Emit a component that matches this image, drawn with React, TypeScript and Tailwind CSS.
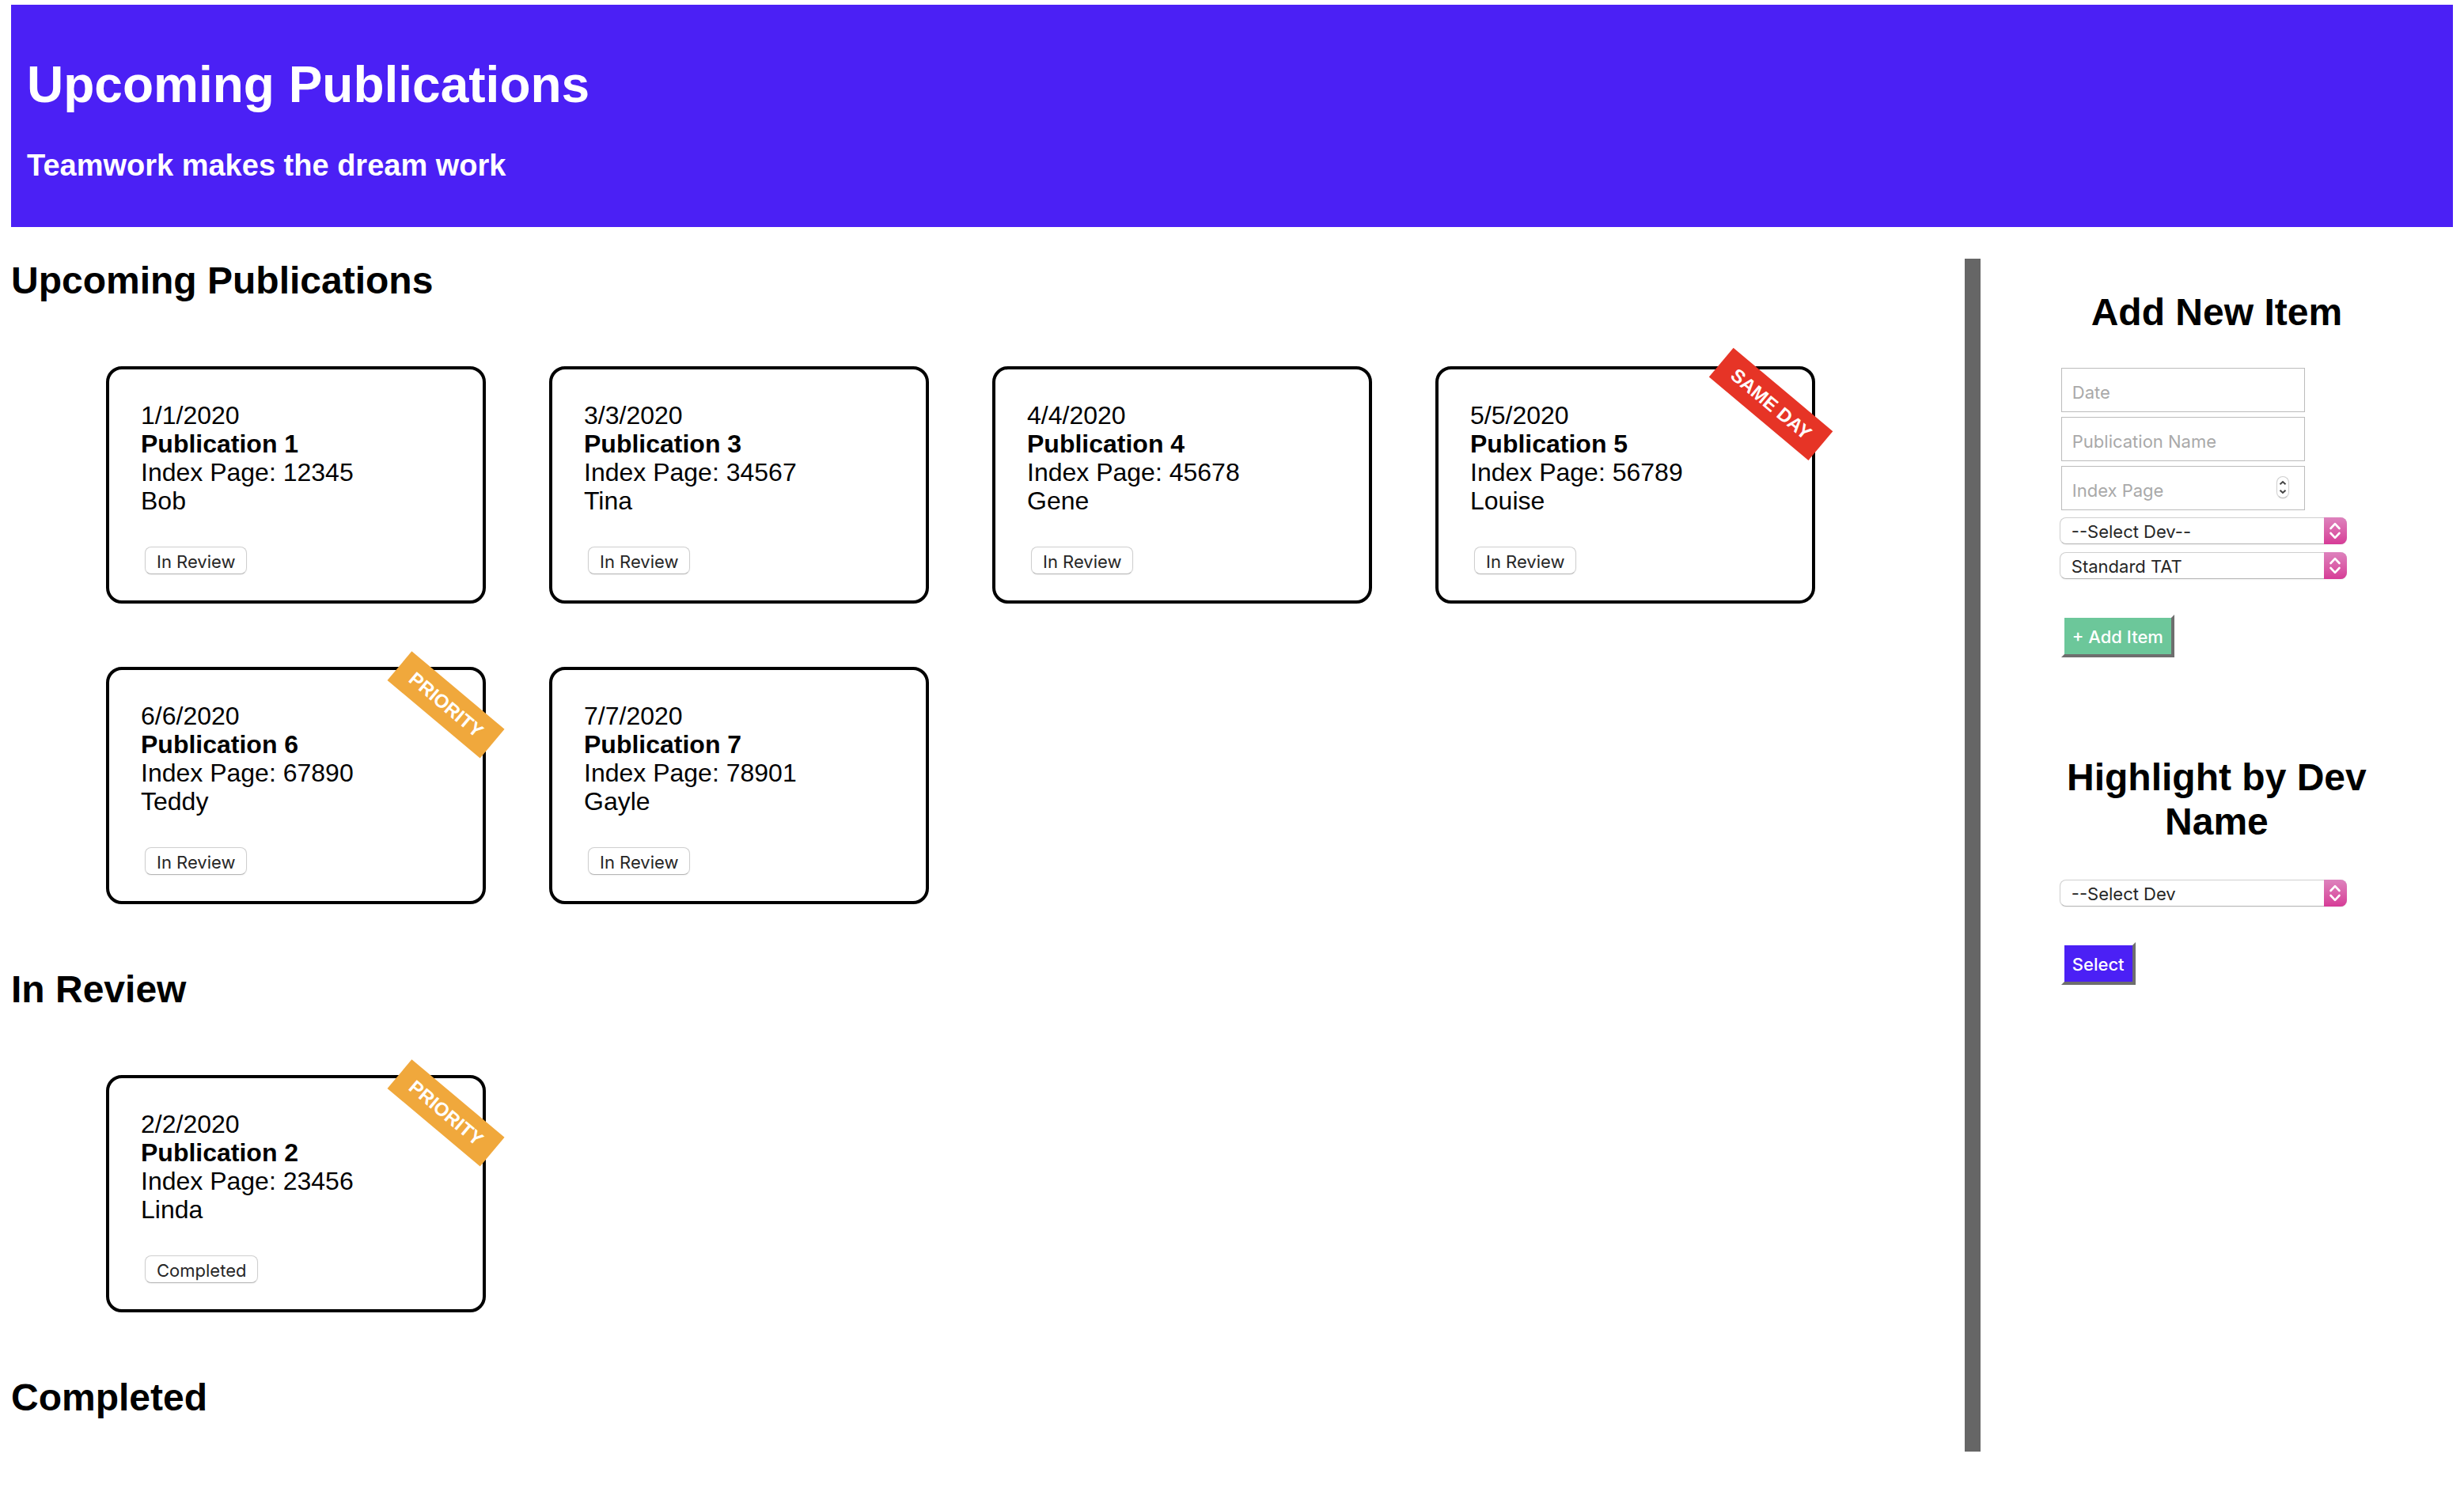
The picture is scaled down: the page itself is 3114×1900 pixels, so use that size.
import React from "react";

type Tag = "SAME DAY" | "PRIORITY";

interface Publication {
  date: string;
  name: string;
  page: number;
  dev: string;
  tag?: Tag;
}

const upcoming: Publication[] = [
  { date: "1/1/2020", name: "Publication 1", page: 12345, dev: "Bob" },
  { date: "3/3/2020", name: "Publication 3", page: 34567, dev: "Tina" },
  { date: "4/4/2020", name: "Publication 4", page: 45678, dev: "Gene" },
  { date: "5/5/2020", name: "Publication 5", page: 56789, dev: "Louise", tag: "SAME DAY" },
  { date: "6/6/2020", name: "Publication 6", page: 67890, dev: "Teddy", tag: "PRIORITY" },
  { date: "7/7/2020", name: "Publication 7", page: 78901, dev: "Gayle" },
];

const inReview: Publication[] = [
  { date: "2/2/2020", name: "Publication 2", page: 23456, dev: "Linda", tag: "PRIORITY" },
];

const devs = ["Bob", "Tina", "Gene", "Louise", "Teddy", "Gayle", "Linda"];

const ribbonColor: Record<Tag, string> = {
  "SAME DAY": "bg-[#e63426]",
  PRIORITY: "bg-[#f0a83c]",
};

function Card({ item, action }: { item: Publication; action: string }) {
  return (
    <li className="relative min-h-[300px] w-[480px] rounded-[20px] border-4 border-black p-10 pb-8 text-[32px] leading-9">
      <p>{item.date}</p>
      <p className="font-bold">{item.name}</p>
      <p>Index Page: {item.page}</p>
      <p>{item.dev}</p>
      <button
        type="button"
        className="mt-10 ml-[5px] block h-[35px] rounded-lg border border-[#cfcfcf] border-b-[#b5b5b5] bg-white px-3.5 pt-0.5 font-['Inter',sans-serif] text-[22px] leading-8 text-[#262626] shadow-xs"
      >
        {action}
      </button>
      {item.tag && (
        <span
          className={`absolute top-5 -right-[30px] rotate-40 px-5 py-2.5 text-2xl leading-7 font-bold whitespace-nowrap text-white ${ribbonColor[item.tag]}`}
        >
          {item.tag}
        </span>
      )}
    </li>
  );
}

function Board({ title, items, action }: { title: string; items: Publication[]; action: string }) {
  return (
    <section>
      <h2 className="text-5xl leading-14 font-bold">{title}</h2>
      {items.length > 0 ? (
        <ul className="flex flex-wrap gap-20 py-20 pl-[120px]">
          {items.map((item) => (
            <Card key={item.name} item={item} action={action} />
          ))}
        </ul>
      ) : (
        <div className="h-10" />
      )}
    </section>
  );
}

function Select({ label, options }: { label: string; options: string[] }) {
  return (
    <div className="relative w-[363px] rounded-lg shadow-xs">
      <select
        aria-label={label}
        className="block h-[34px] w-full appearance-none rounded-lg border border-[#cfcfcf] border-b-[#b5b5b5] bg-white pt-0.5 pr-10 pl-3.5 text-[22px] leading-7 text-[#262626]"
      >
        {options.map((o) => (
          <option key={o}>{o}</option>
        ))}
      </select>
      <span className="pointer-events-none absolute inset-y-0 right-0 flex w-[29px] items-center justify-center rounded-r-lg bg-linear-to-b from-[#dd82bd] to-[#d63a97]">
        <svg width="16" height="22" viewBox="0 0 16 22" fill="none" stroke="white" strokeWidth="2.6" strokeLinecap="round" strokeLinejoin="round">
          <path d="M2.500 8 8 2.200 13.500 8M2.500 14 8 19.800 13.500 14" />
        </svg>
      </span>
    </div>
  );
}

const field =
  "block h-14 w-[308px] border border-[#bcbcbc] bg-white px-[13px] pt-1.5 text-[22px] text-black placeholder:text-[#a9a9a9] placeholder:opacity-100";

const raised =
  "ml-0.5 mt-[45px] block h-[54px] border-4 border-t-white border-r-[#6e6e6e] border-b-[#6e6e6e] border-l-white px-2.5 pt-0.5 text-[22px] leading-7 font-medium text-white";

export default function App() {
  return (
    <div className="bg-white px-3.5 pt-1.5 font-['Liberation_Sans',Arial,sans-serif] text-black">
      <header className="bg-[#4b20f5] px-5 pt-16 pb-[55px] text-white">
        <h1 className="text-[64px] leading-[74px] font-bold">Upcoming Publications</h1>
        <h3 className="mt-[42px] text-[38px] leading-[46px] font-bold">Teamwork makes the dream work</h3>
      </header>

      <div className="mt-10 flex">
        <main className="w-4/5">
          <Board title="Upcoming Publications" items={upcoming} action="In Review" />
          <Board title="In Review" items={inReview} action="Completed" />
          <Board title="Completed" items={[]} action="" />
        </main>

        <aside className="w-1/5 border-l-[20px] border-[#666666] px-[100px] pt-10 font-['Inter',sans-serif]">
          <form onSubmit={(e) => e.preventDefault()}>
            <h2 className="text-center font-['Liberation_Sans',Arial,sans-serif] text-5xl leading-14 font-bold">
              Add New Item
            </h2>
            <div className="mt-[42px] ml-0.5 flex flex-col gap-1.5">
              <input type="text" aria-label="Date" placeholder="Date" className={field} />
              <input type="text" aria-label="Publication Name" placeholder="Publication Name" className={field} />
              <div className="relative w-[308px]">
                <input type="text" inputMode="numeric" aria-label="Index Page" placeholder="Index Page" className={field} />
                <span className="pointer-events-none absolute top-[13px] right-5 flex h-7 w-4 items-center justify-center rounded-full border border-[#cfcfcf] border-b-[#b5b5b5] bg-white shadow-xs">
                  <svg width="10" height="18" viewBox="0 0 10 18" fill="none" stroke="#444444" strokeWidth="2">
                    <path d="M1.500 5.200 5 2 8.500 5.200M1.500 12.800 5 16 8.500 12.800" />
                  </svg>
                </span>
              </div>
            </div>
            <div className="mt-[9px] flex flex-col gap-2.5">
              <Select label="Developer" options={["--Select Dev--", ...devs]} />
              <Select label="Turnaround time" options={["Standard TAT", "Priority", "Same Day"]} />
            </div>
            <button type="submit" className={`${raised} bg-[#6cc79a]`}>
              + Add Item
            </button>
          </form>

          <form className="mt-[124px]" onSubmit={(e) => e.preventDefault()}>
            <h2 className="mb-[45px] text-center font-['Liberation_Sans',Arial,sans-serif] text-5xl leading-14 font-bold">
              Highlight by Dev Name
            </h2>
            <Select label="Highlight developer" options={["--Select Dev", ...devs]} />
            <button type="submit" className={`${raised} bg-[#4b20f5]`}>
              Select
            </button>
          </form>
        </aside>
      </div>
    </div>
  );
}
